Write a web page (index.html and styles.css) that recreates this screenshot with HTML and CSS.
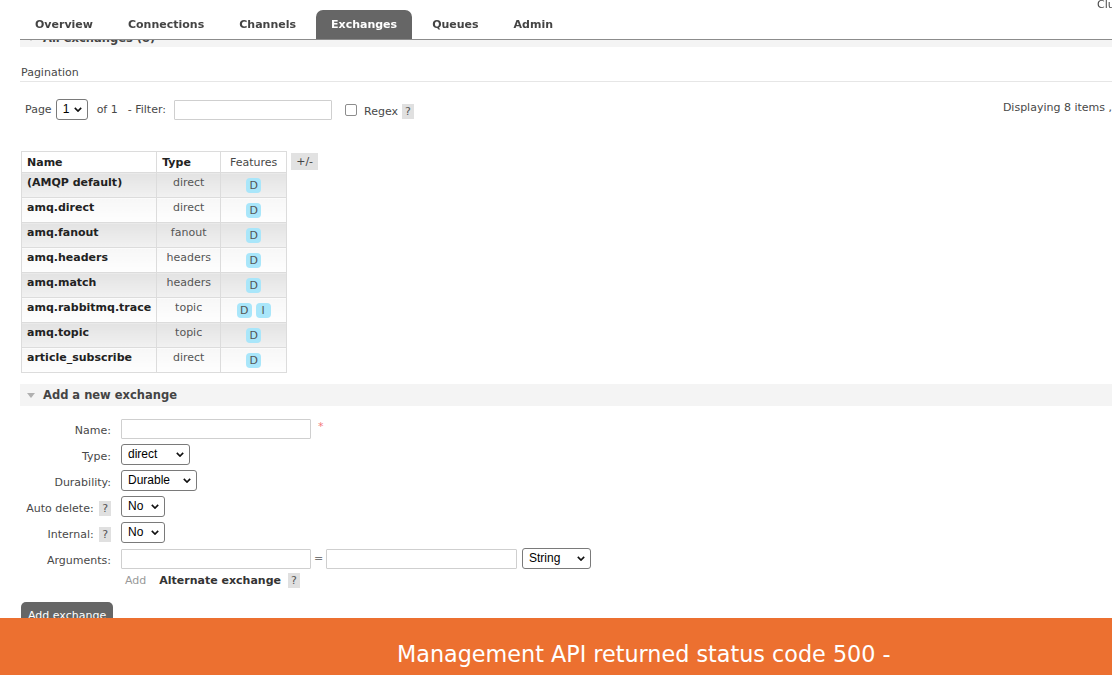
FILE: index.html
```html
<!DOCTYPE html>
<html lang="en">
<head>
<meta charset="utf-8">
<title>RabbitMQ Management - Exchanges</title>
<link rel="stylesheet" href="styles.css">
</head>
<body>
<div class="page">
  <header class="top">
    <div class="cluster">Cluster</div>
    <ul class="tabs">
      <li class="tab">Overview</li>
      <li class="tab">Connections</li>
      <li class="tab">Channels</li>
      <li class="tab active">Exchanges</li>
      <li class="tab">Queues</li>
      <li class="tab">Admin</li>
    </ul>
  </header>

  <main class="content">
    <section class="section">
      <h2 class="section-head first"><span class="tri"></span>All exchanges (8)</h2>
      <h3 class="sub">Pagination</h3>
      <div class="pager">
        <div class="pager-left">
          <span class="lbl lbl-page">Page</span>
          <span class="sel sel-page"><select><option>1</option></select><svg class="chev" viewBox="0 0 10 6"><path d="M1 1l4 4 4-4"/></svg></span>
          <span class="lbl lbl-of">of 1</span>
          <span class="lbl lbl-filter">- Filter:</span>
          <input class="txt txt-filter" type="text">
          <span class="check"></span>
          <span class="lbl lbl-regex">Regex</span>
          <span class="help">?</span>
        </div>
        <div class="pager-right">Displaying 8 items ,</div>
      </div>

      <div class="table-row">
        <table class="list">
          <thead>
            <tr><th class="c-name">Name</th><th class="c-type">Type</th><th class="c-feat">Features</th></tr>
          </thead>
          <tbody>
            <tr class="alt1"><td class="c-name">(AMQP default)</td><td class="c-type">direct</td><td class="c-feat"><span class="badge">D</span></td></tr>
            <tr class="alt2"><td class="c-name">amq.direct</td><td class="c-type">direct</td><td class="c-feat"><span class="badge">D</span></td></tr>
            <tr class="alt1"><td class="c-name">amq.fanout</td><td class="c-type">fanout</td><td class="c-feat"><span class="badge">D</span></td></tr>
            <tr class="alt2"><td class="c-name">amq.headers</td><td class="c-type">headers</td><td class="c-feat"><span class="badge">D</span></td></tr>
            <tr class="alt1"><td class="c-name">amq.match</td><td class="c-type">headers</td><td class="c-feat"><span class="badge">D</span></td></tr>
            <tr class="alt2"><td class="c-name">amq.rabbitmq.trace</td><td class="c-type">topic</td><td class="c-feat"><span class="badge">D</span><span class="badge">I</span></td></tr>
            <tr class="alt1"><td class="c-name">amq.topic</td><td class="c-type">topic</td><td class="c-feat"><span class="badge">D</span></td></tr>
            <tr class="alt2"><td class="c-name">article_subscribe</td><td class="c-type">direct</td><td class="c-feat"><span class="badge">D</span></td></tr>
          </tbody>
        </table>
        <span class="plusminus">+/-</span>
      </div>
    </section>

    <section class="section">
      <h2 class="section-head"><span class="tri"></span>Add a new exchange</h2>
      <form class="form">
        <label class="f-label">Name:</label>
        <div class="f-ctrl"><input class="txt txt-wide" type="text"><span class="req">*</span></div>

        <label class="f-label">Type:</label>
        <div class="f-ctrl"><span class="sel sel-type"><select><option>direct</option></select><svg class="chev" viewBox="0 0 10 6"><path d="M1 1l4 4 4-4"/></svg></span></div>

        <label class="f-label">Durability:</label>
        <div class="f-ctrl"><span class="sel sel-dur"><select><option>Durable</option></select><svg class="chev" viewBox="0 0 10 6"><path d="M1 1l4 4 4-4"/></svg></span></div>

        <label class="f-label">Auto delete: <span class="help">?</span></label>
        <div class="f-ctrl"><span class="sel sel-no"><select><option>No</option></select><svg class="chev" viewBox="0 0 10 6"><path d="M1 1l4 4 4-4"/></svg></span></div>

        <label class="f-label">Internal: <span class="help">?</span></label>
        <div class="f-ctrl"><span class="sel sel-no"><select><option>No</option></select><svg class="chev" viewBox="0 0 10 6"><path d="M1 1l4 4 4-4"/></svg></span></div>

        <label class="f-label">Arguments:</label>
        <div class="f-ctrl">
          <input class="txt txt-wide" type="text"><span class="eq">=</span><input class="txt txt-val" type="text">
          <span class="sel sel-str"><select><option>String</option></select><svg class="chev" viewBox="0 0 10 6"><path d="M1 1l4 4 4-4"/></svg></span>
        </div>

        <span class="f-label f-blank"></span>
        <div class="f-ctrl f-add"><span class="add">Add</span><b class="alt">Alternate exchange</b><span class="help">?</span></div>
      </form>
      <button class="btn" type="button">Add exchange</button>
    </section>
  </main>

  <div class="banner"><span class="banner-text">Management API returned status code 500 -</span></div>
</div>
</body>
</html>
```

FILE: styles.css
```css
html, body {
  margin: 0;
  padding: 0;
  background: #fff;
  overflow: hidden;
}
body {
  font-family: "DejaVu Sans", Verdana, sans-serif;
  font-size: 11px;
  color: #484848;
}
.page {
  width: 1112px;
  height: 675px;
  position: relative;
}

/* ---------- header ---------- */
.top {
  position: fixed;
  top: 0;
  left: 20px;
  right: 0;
  height: 39px;
  background: #fff;
  border-bottom: 1px solid #8c8c8c;
  display: flex;
  flex-direction: column;
  z-index: 5;
}
.cluster {
  height: 10px;
  line-height: 10px;
  font-size: 11px;
  text-align: right;
  margin-right: -24px;
  color: #484848;
  white-space: nowrap;
}
.tabs {
  list-style: none;
  margin: 0;
  padding: 0;
  display: flex;
  gap: 5px;
  height: 29px;
}
.tab {
  padding: 0 15px;
  font-weight: bold;
  font-size: 11px;
  color: #444;
  line-height: 29px;
  border-radius: 7px 7px 0 0;
}
.tab.active {
  background: #666;
  color: #fff;
}

/* ---------- content ---------- */
.content {
  padding: 25px 0 0 20px;
}
.section-head {
  margin: 0;
  height: 22px;
  line-height: 22px;
  background: #f4f4f4;
  font-size: 11.5px;
  font-weight: bold;
  color: #444;
  display: flex;
  align-items: center;
  padding-left: 7px;
}
.section-head.first {
  box-sizing: border-box;
  align-items: flex-start;
  padding-top: 5px;
  line-height: 16px;
}
.section-head.first .tri { margin-top: 6px; }
.tri {
  width: 0;
  height: 0;
  border-left: 4.5px solid transparent;
  border-right: 4.5px solid transparent;
  border-top: 5px solid #b0b0b0;
  margin-right: 8px;
}
.sub {
  margin: 18px 0 0 0;
  font-size: 11px;
  font-weight: normal;
  line-height: 16px;
  padding-left: 1px;
  border-bottom: 1px solid #e6e6e6;
  color: #484848;
}

.pager {
  margin-top: 17px;
  display: flex;
  align-items: flex-start;
  padding-left: 5px;
}
.pager-left {
  display: flex;
  align-items: center;
  height: 21px;
}
.lbl-page { margin-right: 4px; }
.lbl-of { margin-right: 10px; }
.lbl-filter { margin-right: 8px; }
.lbl-regex { margin-top: 3px; }
.pager-left .help { margin-top: 3px; margin-left: 4px; }
.pager-right {
  margin-left: auto;
  line-height: 18px;
  white-space: nowrap;
}

.sel {
  position: relative;
  display: inline-flex;
  align-items: center;
  margin-right: 9px;
}
.sel select {
  -webkit-appearance: none;
  appearance: none;
  font-family: "Liberation Sans", Arial, sans-serif;
  font-size: 12px;
  color: #000;
  background: #fff;
  border: 1px solid #7a7a7a;
  border-radius: 3px;
  height: 21px;
  padding: 0 0 1px 6px;
  margin: 0;
}
.chev {
  position: absolute;
  right: 6px;
  top: 8px;
  width: 8px;
  height: 5px;
  fill: none;
  stroke: #111;
  stroke-width: 2;
  pointer-events: none;
}
.sel-page select { width: 32px; }
.sel-type select { width: 69px; }
.sel-dur select { width: 76px; }
.sel-no select { width: 44px; }
.sel-str select { width: 69px; }

.txt {
  box-sizing: border-box;
  height: 20px;
  border: 1px solid #cfcfcf;
  border-radius: 1px;
  margin: 0;
  padding: 0 3px;
  background: #fff;
}
.txt-filter { width: 158px; margin-right: 13px; }
.check {
  box-sizing: border-box;
  width: 12px;
  height: 12px;
  border: 1px solid #8d8d8d;
  border-radius: 2px;
  margin-right: 7px;
}
.help {
  display: inline-block;
  background: #e0e0e0;
  color: #555;
  font-size: 11px;
  line-height: 15px;
  padding: 0 3px;
  margin-left: 4px;
}

/* ---------- table ---------- */
.table-row {
  margin-top: 31px;
  display: flex;
  align-items: flex-start;
  padding-left: 1px;
}
.list {
  border-collapse: collapse;
  border: 1px solid #d6d6d6;
}
.list th, .list td {
  border: 1px solid #dcdcdc;
  font-size: 11px;
  padding: 0 5px;
  box-sizing: border-box;
}
.list th {
  height: 21px;
  text-align: left;
  background: #fff;
  color: #222;
  font-weight: bold;
  vertical-align: middle;
}
.list .c-name { width: 134px; }
.list .c-type { width: 64px; }
.list .c-feat { width: 66px; }
.list th.c-feat { font-weight: normal; color: #484848; text-align: center; }
.list td {
  height: 25px;
  vertical-align: top;
  line-height: 14px;
  padding-top: 3px;
}
.list td.c-name { font-weight: bold; color: #222; }
.list td.c-type { text-align: center; color: #555; }
.list td.c-feat { text-align: center; vertical-align: middle; padding-top: 0; }
.alt1 td { background: linear-gradient(#e3e3e3, #f1f1f1); }
.alt2 td { background: linear-gradient(#f7f7f7, #fefefe); }
.badge {
  display: inline-block;
  vertical-align: middle;
  min-width: 9px;
  padding: 0 3px;
  height: 15px;
  line-height: 15px;
  border-radius: 4px;
  background: #a9e6fa;
  color: #555;
  font-size: 11px;
  margin: 0 2px;
}
.plusminus {
  margin-left: 4px;
  margin-top: 2px;
  background: #e2e2e2;
  color: #444;
  font-size: 11px;
  line-height: 17px;
  padding: 0 5px;
}

/* ---------- add form ---------- */
.section + .section { margin-top: 11px; }
.form {
  margin-top: 12px;
  display: grid;
  grid-template-columns: 91px 1fr;
  column-gap: 10px;
  row-gap: 5px;
  font-size: 11px;
}
.f-label {
  box-sizing: border-box;
  text-align: right;
  height: 21px;
  padding-top: 3px;
  line-height: 20px;
  white-space: nowrap;
  color: #484848;
}
.f-label .help { margin-left: 2px; }
.f-ctrl {
  display: flex;
  align-items: center;
  height: 21px;
}
.txt-wide { width: 190px; }
.txt-val { width: 191px; margin-right: 5px; }
.req {
  color: #f47a7a;
  margin-left: 7px;
  font-size: 11px;
  position: relative;
  top: -2px;
}
.eq {
  color: #777;
  width: 15px;
  text-align: center;
}
.f-blank { height: 13px; padding-top: 0; }
.f-add { height: 13px; padding-left: 4px; }
.add { color: #999; margin-right: 13px; }
.alt { color: #333; margin-right: 3px; }
.f-add .help { margin-left: 4px; }

.btn {
  margin-top: 15px;
  margin-left: 1px;
  display: block;
  background: #666;
  color: #fff;
  border: 0;
  border-radius: 5px;
  font-family: "DejaVu Sans", Verdana, sans-serif;
  font-size: 11px;
  padding: 5px 7px;
  height: 26px;
}

/* ---------- banner ---------- */
.banner {
  position: fixed;
  left: 0;
  right: 0;
  bottom: 0;
  height: 57px;
  background: #ec7030;
  color: #fff;
  z-index: 6;
}
.banner-text {
  display: block;
  font-size: 22.3px;
  line-height: 26px;
  padding: 23px 0 0 397px;
  white-space: nowrap;
}
```
